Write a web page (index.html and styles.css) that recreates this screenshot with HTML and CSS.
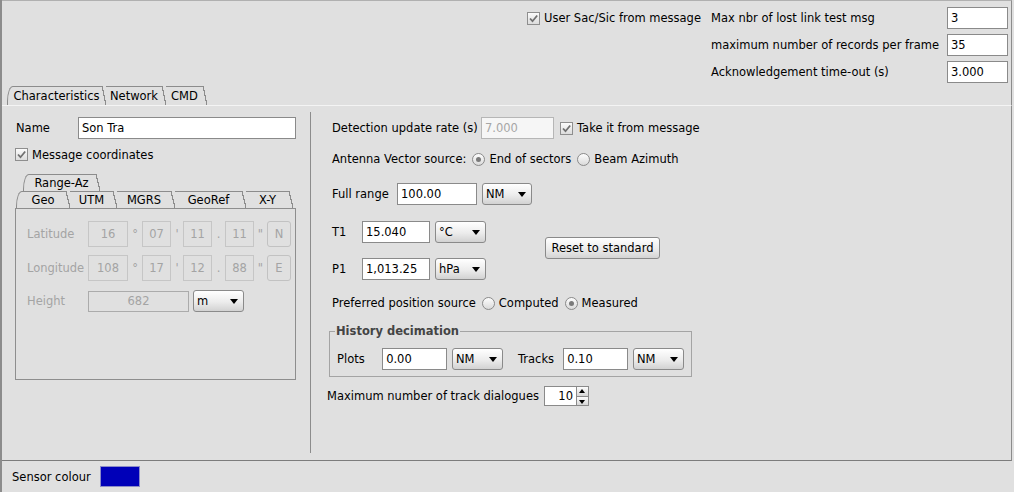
FILE: index.html
```html
<!DOCTYPE html>
<html>
<head>
<meta charset="utf-8">
<link rel="stylesheet" href="styles.css">
</head>
<body>
<div class="window">
  <div class="top">
    <div class="settings">
      <div class="chkrow"><span class="cb"><svg width="13" height="13" viewBox="0 0 13 13"><path d="M3 6.5 L5.5 9.2 L10.2 3.5" fill="none" stroke="#707070" stroke-width="1.8"/></svg></span><span>User Sac/Sic from message</span></div>
      <span class="slabel">Max nbr of lost link test msg</span>
      <div class="field">3</div>
      <span></span>
      <span class="slabel">maximum number of records per frame</span>
      <div class="field">35</div>
      <span></span>
      <span class="slabel">Acknowledgement time-out (s)</span>
      <div class="field">3.000</div>
    </div>
    <div class="tabs outer">
      <div class="tab first t-char">Characteristics</div>
      <div class="tab t-net">Network</div>
      <div class="tab t-cmd">CMD</div>
    </div>
  </div>

  <div class="panel">
    <div class="left">
      <div class="namerow">
        <span class="namelabel">Name</span>
        <div class="field namefield">Son Tra</div>
      </div>
      <div class="chkrow msgrow"><span class="cb"><svg width="13" height="13" viewBox="0 0 13 13"><path d="M3 6.5 L5.5 9.2 L10.2 3.5" fill="none" stroke="#707070" stroke-width="1.8"/></svg></span><span>Message coordinates</span></div>

      <div class="coord">
        <div class="tabs inner row2">
          <div class="tab first t-raz">Range-Az</div>
        </div>
        <div class="tabs inner row1">
          <div class="tab first t-geo">Geo</div>
          <div class="tab t-utm">UTM</div>
          <div class="tab t-mgrs">MGRS</div>
          <div class="tab t-georef">GeoRef</div>
          <div class="tab t-xy">X-Y</div>
        </div>
        <div class="coordbox">
          <div class="crow">
            <span class="clabel">Latitude</span>
            <span class="cfield w40">16</span><span class="csep s14">°</span>
            <span class="cfield w29">07</span><span class="csep s12">'</span>
            <span class="cfield w29">11</span><span class="csep s13">.</span>
            <span class="cfield w29">11</span><span class="csep s13">"</span>
            <span class="cbtn">N</span>
          </div>
          <div class="crow">
            <span class="clabel">Longitude</span>
            <span class="cfield w40">108</span><span class="csep s14">°</span>
            <span class="cfield w29">17</span><span class="csep s12">'</span>
            <span class="cfield w29">12</span><span class="csep s13">.</span>
            <span class="cfield w29">88</span><span class="csep s13">"</span>
            <span class="cbtn">E</span>
          </div>
          <div class="crow hrow">
            <span class="clabel">Height</span>
            <span class="hfield">682</span>
            <div class="combo w51 hcombo">m</div>
          </div>
        </div>
      </div>
    </div>
    <div class="sep"></div>
    <div class="right">
      <div class="rrow r-det">
        <span class="l-det">Detection update rate (s)</span>
        <div class="field dfield">7.000</div>
        <span class="cb"><svg width="13" height="13" viewBox="0 0 13 13"><path d="M3 6.5 L5.5 9.2 L10.2 3.5" fill="none" stroke="#707070" stroke-width="1.8"/></svg></span>
        <span class="cbtext">Take it from message</span>
      </div>
      <div class="rrow r-ant">
        <span>Antenna Vector source:</span>
        <span class="radio on"></span><span class="rtext">End of sectors</span>
        <span class="radio"></span><span class="rtext">Beam Azimuth</span>
      </div>
      <div class="rrow r-fr">
        <span class="l-fr">Full range</span>
        <div class="field w80">100.00</div>
        <div class="combo w50">NM</div>
      </div>
      <div class="tp">
        <div class="tpcol">
          <div class="rrow r-t1">
            <span class="l-tp">T1</span>
            <div class="field w68">15.040</div>
            <div class="combo w51">°C</div>
          </div>
          <div class="rrow r-p1">
            <span class="l-tp">P1</span>
            <div class="field w68">1,013.25</div>
            <div class="combo w51">hPa</div>
          </div>
        </div>
        <div class="button">Reset to standard</div>
      </div>
      <div class="rrow r-pref">
        <span>Preferred position source</span>
        <span class="radio"></span><span class="rtext">Computed</span>
        <span class="radio on"></span><span class="rtext">Measured</span>
      </div>
      <fieldset class="group">
        <legend>History decimation</legend>
        <div class="grow">
          <span class="l-g">Plots</span>
          <div class="field w66">0.00</div>
          <div class="combo w51">NM</div>
          <span class="l-g l-tracks">Tracks</span>
          <div class="field w66">0.10</div>
          <div class="combo w51">NM</div>
        </div>
      </fieldset>
      <div class="rrow r-max">
        <span>Maximum number of track dialogues</span>
        <div class="spinner">
          <span class="spval">10</span>
          <span class="spbtns"><span class="spup"></span><span class="spdown"></span></span>
        </div>
      </div>
    </div>
  </div>

  <div class="footer">
    <span class="flabel">Sensor colour</span>
    <span class="swatch"></span>
  </div>
</div>
</body>
</html>
```

FILE: styles.css
```css
* { box-sizing: border-box; }
html, body { margin: 0; padding: 0; }
body {
  font-family: "DejaVu Sans", "Liberation Sans", sans-serif;
  font-size: 11.5px;
  color: #000;
  background: #e0e0e0;
}
.window {
  width: 1014px;
  height: 492px;
  border-left: 2px solid #8c8c8c;
  background: #e0e0e0;
  display: flex;
  flex-direction: column;
  overflow: hidden;
}

/* top area */
.top {
  height: 105px;
  flex: none;
  margin-right: 2px;
  border-top: 1px solid #b0b0b0;
  border-right: 1px solid #8c8c8c;
  padding-top: 6px;
  display: flex;
  flex-direction: column;
}
.settings {
  display: grid;
  grid-template-columns: 183px 236px 61px;
  grid-auto-rows: 22px;
  row-gap: 5px;
  justify-content: end;
  align-items: center;
  padding-right: 3px;
}
.chkrow { display: flex; align-items: center; gap: 4px; white-space: nowrap; }
.settings .chkrow { margin-left: -1px; }
.slabel { white-space: nowrap; }

.field {
  height: 22px;
  border: 1px solid #8a8a8a;
  background: #fff;
  padding-left: 3px;
  display: flex;
  align-items: center;
  white-space: nowrap;
}

.cb {
  width: 13px;
  height: 13px;
  flex: none;
  border: 1px solid #8e8e8e;
  background: linear-gradient(#fbfbfb, #dcdcdc);
  position: relative;
  display: inline-block;
}
.cb svg { position: absolute; left: -1px; top: -1px; }

/* tabs */
.tabs { display: flex; }
.tabs.outer { margin-top: 3px; margin-left: 5px; height: 19px; }
.tab {
  position: relative;
  height: 100%;
  display: flex;
  align-items: center;
  justify-content: center;
  padding-right: 4px;
  white-space: nowrap;
}
.tab::before {
  content: "";
  position: absolute;
  left: 0;
  right: 4px;
  top: 0;
  border-top: 1px solid #8c8c8c;
}
.tab.first::before {
  bottom: 0;
  border-left: 1px solid #8c8c8c;
  border-top-left-radius: 6px 15px;
}
.tab::after {
  content: "";
  position: absolute;
  right: 0;
  top: 0;
  bottom: 0;
  width: 4px;
  background: linear-gradient(to top right, transparent calc(50% - 0.6px), #8c8c8c calc(50% - 0.6px), #8c8c8c calc(50% + 0.6px), transparent calc(50% + 0.6px));
}
.tab.first { padding-left: 4px; }
.t-char { width: 99px; }
.t-net { width: 60px; }
.t-cmd { width: 41px; }

/* main panel */
.panel {
  height: 356px;
  flex: none;
  margin-right: 2px;
  border-top: 1px solid #f4f4f4;
  border-bottom: 1px solid #7c7c7c;
  border-right: 1px solid #8c8c8c;
  display: flex;
}
.left {
  width: 308px;
  flex: none;
  padding-left: 13px;
  padding-top: 11px;
  display: flex;
  flex-direction: column;
}
.sep {
  width: 1px;
  flex: none;
  background: #8c8c8c;
  margin-top: 6px;
  margin-bottom: 7px;
}
.right {
  flex: 1;
  padding-left: 21px;
  padding-top: 11px;
  display: flex;
  flex-direction: column;
}

.namerow { display: flex; align-items: center; height: 22px; }
.namelabel { width: 63px; padding-left: 1px; }
.namefield { width: 218px; }
.msgrow { margin-top: 9px; height: 13px; }

.coord { margin-top: 13px; width: 281px; display: flex; flex-direction: column; }
.tabs.inner { height: 17px; }
.row2 { margin-left: 8px; }
.row1 { margin-left: 1px; }
.t-raz { width: 77px; }
.t-geo { width: 54px; }
.t-utm { width: 47px; }
.t-mgrs { width: 58px; }
.t-georef { width: 71px; }
.t-xy { width: 47px; }

.coordbox {
  height: 172px;
  border: 1px solid #8e8e8e;
  padding-left: 11px;
  padding-top: 12px;
  display: flex;
  flex-direction: column;
  gap: 8px;
  color: #a4a4a4;
}
.crow { display: flex; align-items: center; height: 26px; }
.clabel { width: 61px; }
.cfield {
  height: 26px;
  border: 1px solid #c6c6c6;
  display: flex;
  align-items: center;
  justify-content: center;
}
.w40 { width: 40px; }
.w29 { width: 29px; }
.csep { display: flex; justify-content: center; }
.s14 { width: 14px; }
.s12 { width: 12px; }
.s13 { width: 13px; }
.cbtn {
  width: 24px;
  height: 26px;
  border: 1px solid #c2c2c2;
  border-radius: 3px;
  display: flex;
  align-items: center;
  justify-content: center;
}
.hrow { height: 24px; margin-top: 0; }
.hfield {
  width: 101px;
  height: 21px;
  border: 1px solid #ababab;
  display: flex;
  align-items: center;
  justify-content: center;
}
.hcombo { margin-left: 4px; height: 24px; }

/* combo */
.combo {
  height: 22px;
  border: 1px solid #8a8a8a;
  border-radius: 3px;
  background: linear-gradient(#ffffff, #ececec 55%, #d2d2d2);
  padding-left: 3px;
  display: flex;
  align-items: center;
  position: relative;
  color: #000;
  flex: none;
}
.combo::after {
  content: "";
  position: absolute;
  right: 5px;
  top: 50%;
  margin-top: -2px;
  border-left: 4px solid transparent;
  border-right: 4px solid transparent;
  border-top: 5px solid #000;
}
.w50 { width: 50px; }
.w51 { width: 51px; }
.w80 { width: 80px; }
.w68 { width: 68px; }
.w66 { width: 66px; }

/* right rows */
.rrow { display: flex; align-items: center; height: 22px; white-space: nowrap; }
.l-det { width: 149px; }
.dfield { width: 73px; border-color: #b6b6b6; background: #f6f6f6; color: #a6a6a6; }
.r-det .cb { margin-left: 6px; }
.cbtext { margin-left: 4px; }
.r-ant { margin-top: 9px; }
.radio {
  width: 13px;
  height: 13px;
  border-radius: 50%;
  border: 1px solid #8a8a8a;
  background: linear-gradient(#fdfdfd, #dadada);
  position: relative;
  flex: none;
  margin-left: 6px;
}
.radio.on::after {
  content: "";
  position: absolute;
  left: 3px;
  top: 3px;
  width: 5px;
  height: 5px;
  border-radius: 50%;
  background: #7a7a7a;
}
.rtext { margin-left: 4px; }
.r-fr { margin-top: 13px; }
.l-fr { width: 65px; }
.r-fr .combo, .r-t1 .combo, .r-p1 .combo { margin-left: 5px; }
.tp { display: flex; align-items: center; margin-top: 16px; }
.tpcol { display: flex; flex-direction: column; gap: 15px; }
.l-tp { width: 30px; }
.button {
  margin-left: 59px;
  margin-top: -5px;
  width: 115px;
  height: 22px;
  border: 1px solid #8a8a8a;
  border-radius: 3px;
  background: linear-gradient(#ffffff, #ececec 55%, #d4d4d4);
  display: flex;
  align-items: center;
  justify-content: center;
  white-space: nowrap;
}
.r-pref { margin-top: 12px; }

.group {
  margin: 10px 0 0 -3px;
  padding: 10px 7px 6px 7px;
  width: 363px;
  border: 1px solid #a4a4a4;
  min-width: 0;
}
.group legend {
  font-weight: bold;
  color: #444;
  padding: 0 1px;
  margin-left: -2px;
  line-height: 14px;
}
.grow { display: flex; align-items: center; height: 22px; white-space: nowrap; }
.l-g { width: 46px; }
.grow .combo { margin-left: 5px; }
.l-tracks { margin-left: 15px; }

.r-max { margin-top: 9px; margin-left: -5px; height: 20px; }
.spinner {
  margin-left: 5px;
  width: 45px;
  height: 20px;
  border: 1px solid #8a8a8a;
  background: #fff;
  display: flex;
}
.spval { flex: 1; display: flex; align-items: center; justify-content: flex-end; padding-right: 3px; }
.spbtns { width: 12px; display: flex; flex-direction: column; border-left: 1px solid #8a8a8a; }
.spup, .spdown {
  flex: 1;
  position: relative;
  background: linear-gradient(#fdfdfd, #d6d6d6);
}
.spup { border-bottom: 1px solid #8a8a8a; }
.spup::after, .spdown::after {
  content: "";
  position: absolute;
  left: 2px;
  top: 3px;
  border-left: 3.5px solid transparent;
  border-right: 3.5px solid transparent;
}
.spup::after { border-bottom: 4px solid #000; top: 2px; }
.spdown::after { border-top: 4px solid #000; top: 3px; }

/* footer */
.footer {
  flex: 1;
  display: flex;
  align-items: center;
  padding-left: 10px;
}
.flabel { width: 88px; }
.swatch {
  width: 40px;
  height: 21px;
  background: #0000b8;
  border: 1px solid #8c8cc8;
}
```
